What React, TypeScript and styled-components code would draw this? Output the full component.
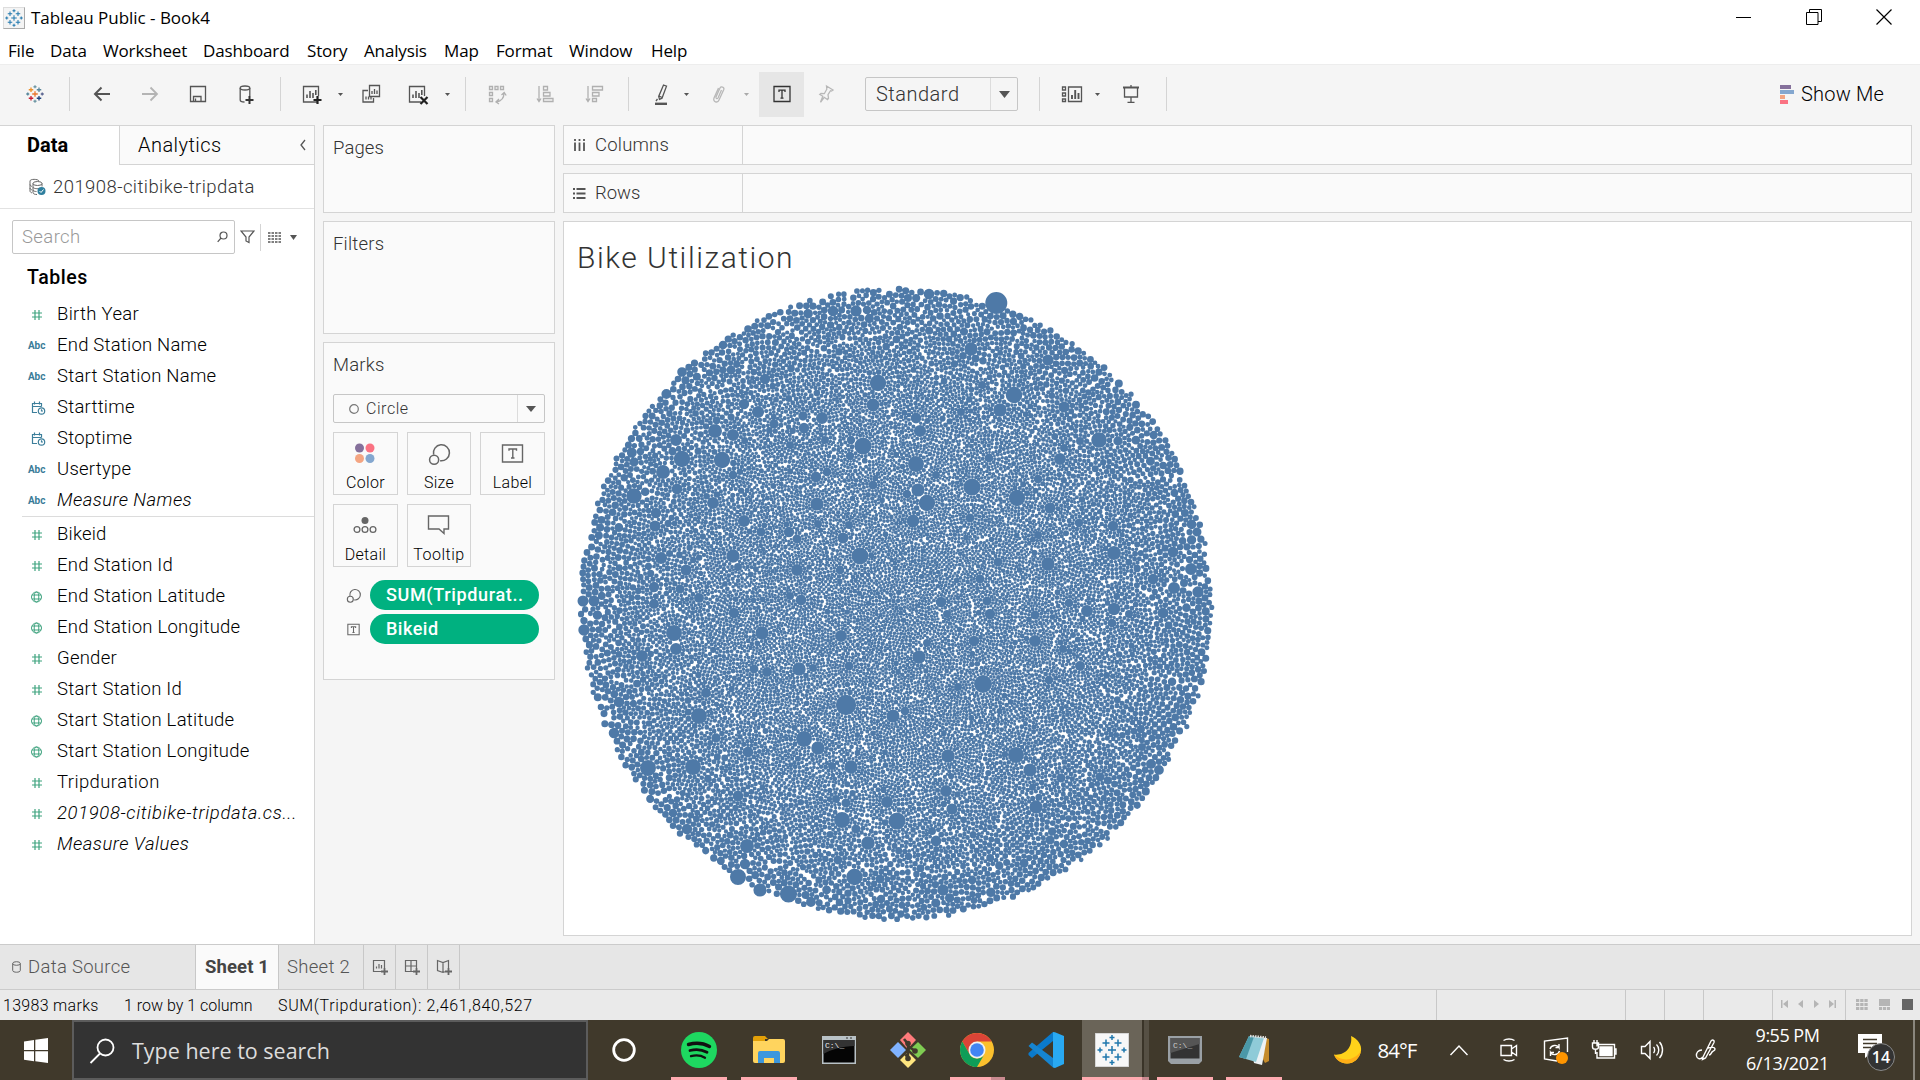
import React, { useMemo } from "react";
import styled, { createGlobalStyle } from "styled-components";

const BOOK = `Roboto, "Open Sans", "Liberation Sans", sans-serif`;
const UI = `"Open Sans", "Noto Sans", sans-serif`;
const LINE = "#d4d4d4";

const Global = createGlobalStyle`
  *, *::before, *::after { box-sizing: border-box; }
  body { margin: 0; background: #f5f5f5; overflow: hidden; }
  svg { display: block; flex: none; }
`;

const Desktop = styled.div`
  width: 1920px;
  height: 1080px;
  display: flex;
  flex-direction: column;
  background: #f5f5f5;
  font-family: ${BOOK};
  font-weight: 300;
  color: #000;
  white-space: nowrap;
  overflow: hidden;
`;

const Text = styled.span<{ $size?: number; $ls?: number; $color?: string; $weight?: number; $ui?: boolean; $italic?: boolean }>`
  font-family: ${(p) => (p.$ui ? UI : BOOK)};
  font-size: ${(p) => p.$size ?? 18}px;
  letter-spacing: ${(p) => p.$ls ?? 0}px;
  color: ${(p) => p.$color ?? "#000"};
  font-weight: ${(p) => p.$weight ?? 300};
  font-style: ${(p) => (p.$italic ? "italic" : "normal")};
  line-height: 1.2;
`;

/* ---------- window chrome ---------- */

const TitleBar = styled.header`
  height: 35px;
  flex: none;
  display: flex;
  align-items: center;
  padding-left: 3px;
  background: #fff;
`;
const AppTile = styled.div`
  width: 22px;
  height: 22px;
  margin-right: 6px;
  display: grid;
  place-items: center;
  background: #f4f4f4;
  border: 1px solid #ccc;
  border-color: #ddd #aaa #aaa #ddd;
`;
const WindowTitle = styled.div`
  padding-top: 1px;
`;
const WindowButtons = styled.div`
  margin-left: auto;
  display: flex;
  padding: 0 1px 2px 0;
`;
const WindowButton = styled.div`
  width: 70px;
  height: 33px;
  display: grid;
  place-items: center;
`;
const MenuBar = styled.nav`
  height: 29px;
  flex: none;
  display: flex;
  align-items: center;
  padding: 3px 0 0 8px;
  background: #fff;
`;
const MenuItem = styled.div<{ $w: number }>`
  width: ${(p) => p.$w}px;
`;

/* ---------- toolbar ---------- */

const Toolbar = styled.div`
  height: 61px;
  flex: none;
  display: flex;
  align-items: center;
  padding-bottom: 2px;
  border-top: 1px solid #ededed;
`;
const Slot = styled.div<{ $w?: number; $ml?: number; $on?: boolean }>`
  width: ${(p) => p.$w ?? 24}px;
  margin-left: ${(p) => p.$ml ?? 0}px;
  height: 45px;
  flex: none;
  display: grid;
  place-items: center;
  background: ${(p) => (p.$on ? "#e6e6e6" : "transparent")};
`;
const Rule = styled.div<{ $h?: number; $ml?: number }>`
  width: 1px;
  flex: none;
  height: ${(p) => p.$h ?? 34}px;
  margin-left: ${(p) => p.$ml ?? 0}px;
  background: ${LINE};
`;
const Picker = styled.div<{ $w: number; $h: number; $btn: number; $m?: string }>`
  width: ${(p) => p.$w}px;
  height: ${(p) => p.$h}px;
  margin: ${(p) => p.$m ?? "0"};
  flex: none;
  display: grid;
  grid-template-columns: 1fr ${(p) => p.$btn}px;
  border: 1px solid #c6c6c6;
  border-radius: 2px;
`;
const PickerValue = styled.div<{ $pad: number }>`
  display: flex;
  align-items: center;
  gap: 7px;
  padding-left: ${(p) => p.$pad}px;
  border-right: 1px solid #dcdcdc;
`;
const PickerButton = styled.div`
  display: grid;
  place-items: center;
`;
const ShowMe = styled.div`
  margin-left: auto;
  width: 140px;
  display: flex;
  align-items: center;
  gap: 6px;
`;

/* ---------- workspace ---------- */

const Workspace = styled.main`
  height: 819px;
  flex: none;
  display: flex;
`;
const DataPane = styled.aside`
  width: 315px;
  flex: none;
  display: flex;
  flex-direction: column;
  background: #fff;
  border: 1px solid ${LINE};
  border-width: 1px 1px 0 0;
`;
const PaneTabs = styled.div`
  height: 39px;
  flex: none;
  display: grid;
  grid-template-columns: 119px 1fr;
`;
const PaneTab = styled.div<{ $active?: boolean }>`
  display: flex;
  align-items: center;
  justify-content: space-between;
  padding: 0 7px ${(p) => (p.$active ? 2 : 0)}px ${(p) => (p.$active ? 27 : 18)}px;
  ${(p) => !p.$active && `background:#fafafa;border-left:1px solid ${LINE};border-bottom:1px solid ${LINE};`}
`;
const Source = styled.div`
  height: 44px;
  flex: none;
  display: flex;
  align-items: center;
  gap: 7px;
  padding: 1px 0 0 28px;
  border-bottom: 1px solid #e2e2e2;
`;
const SearchRow = styled.div`
  height: 45px;
  flex: none;
  display: flex;
  align-items: center;
  padding: 11px 0 0 12px;
`;
const SearchBox = styled.div`
  width: 223px;
  height: 34px;
  display: flex;
  align-items: center;
  justify-content: space-between;
  padding: 0 6px 0 9px;
  border: 1px solid #c6c6c6;
  border-radius: 2px;
`;
const Heading = styled.div`
  height: 45px;
  flex: none;
  padding: 12px 0 0 27px;
`;
const FieldList = styled.div<{ $top?: boolean }>`
  margin-left: ${(p) => (p.$top ? 22 : 0)}px;
  padding-left: ${(p) => (p.$top ? 6 : 28)}px;
  padding-top: ${(p) => (p.$top ? 2 : 0)}px;
  border-top: ${(p) => (p.$top ? "1px solid #dcdcdc" : "0")};
`;
const Field = styled.div`
  height: 31px;
  display: grid;
  grid-template-columns: 29px 1fr;
  align-items: center;
`;

const Cards = styled.section`
  width: 232px;
  margin-left: 8px;
  flex: none;
  display: flex;
  flex-direction: column;
  gap: 8px;
`;
const Card = styled.div<{ $h: number }>`
  height: ${(p) => p.$h}px;
  flex: none;
  padding: 11px 9px 0 9px;
  background: #fafafa;
  border: 1px solid ${LINE};
`;
const MarkGrid = styled.div`
  display: grid;
  grid-template-columns: 65px 64px 65px;
  grid-auto-rows: 63px;
  gap: 9px;
  margin-top: 9px;
`;
const MarkButton = styled.div`
  display: flex;
  flex-direction: column;
  align-items: center;
  justify-content: space-between;
  padding: 8px 0 2px;
  border: 1px solid ${LINE};
`;
const PillRow = styled.div`
  display: grid;
  grid-template-columns: 37px 169px;
  align-items: center;
  height: 34px;
`;
const PillIcon = styled.div`
  padding-left: 12px;
`;
const Pill = styled.div`
  height: 30px;
  display: flex;
  align-items: center;
  padding-left: 16px;
  border-radius: 15px;
  background: #00b180;
`;
const Pills = styled.div`
  padding-top: 11px;
`;

const Sheet = styled.section`
  flex: 1;
  margin: 0 8px 8px 8px;
  display: flex;
  flex-direction: column;
  gap: 8px;
`;
const Shelf = styled.div`
  height: 40px;
  flex: none;
  display: grid;
  grid-template-columns: 179px 1fr;
  background: #fafafa;
  border: 1px solid ${LINE};
`;
const ShelfLabel = styled.div`
  display: flex;
  align-items: center;
  gap: 9px;
  padding: 1px 0 0 9px;
  border-right: 1px solid ${LINE};
`;
const View = styled.div`
  flex: 1;
  display: flex;
  flex-direction: column;
  background: #fff;
  border: 1px solid ${LINE};
`;
const ViewTitle = styled.div`
  height: 58px;
  flex: none;
  padding: 18px 0 0 13px;
`;

/* ---------- sheet tabs and status ---------- */

const SheetTabs = styled.div`
  height: 45px;
  flex: none;
  display: flex;
  background: #e6e6e6;
  border-top: 1px solid #cbcbcb;
`;
const SheetTab = styled.div<{ $w: number; $active?: boolean; $pad?: number }>`
  width: ${(p) => p.$w}px;
  display: flex;
  align-items: center;
  gap: 7px;
  padding-left: ${(p) => p.$pad ?? 8}px;
  border-right: 1px solid #c8c8c8;
  background: ${(p) => (p.$active ? "#fafafa" : "transparent")};
`;
const Status = styled.div`
  height: 31px;
  flex: none;
  display: flex;
  background: #eaeaea;
  border-top: 1px solid #cbcbcb;
`;
const StatusText = styled.div<{ $w: number }>`
  width: ${(p) => p.$w}px;
  display: flex;
  align-items: center;
  padding-top: 1px;
`;
const StatusCell = styled.div<{ $w: number; $shift?: number }>`
  width: ${(p) => p.$w}px;
  display: flex;
  align-items: center;
  justify-content: center;
  padding: 0 0 2px ${(p) => p.$shift ?? 0}px;
  border-left: 1px solid #c8c8c8;
`;

/* ---------- windows taskbar ---------- */

const Taskbar = styled.footer`
  height: 60px;
  flex: none;
  display: flex;
  background: #40392b;
`;
const Start = styled.div`
  width: 72px;
  display: grid;
  place-items: center;
`;
const TaskSearch = styled.div`
  width: 516px;
  display: flex;
  align-items: center;
  gap: 17px;
  padding: 1px 0 0 15px;
  background: #333;
  border: 2px solid #5c5c5c;
`;
const TaskItem = styled.div<{ $w?: number; $ml: number; $bar?: boolean; $active?: boolean }>`
  width: ${(p) => p.$w ?? 56}px;
  margin-left: ${(p) => p.$ml}px;
  flex: none;
  display: grid;
  place-items: center;
  padding-top: 3px;
  border-bottom: 3px solid ${(p) => (p.$bar ? "#ffaab0" : "transparent")};
  background: ${(p) => (p.$active ? "#6a6458" : "transparent")};
  background-clip: padding-box;
`;
const Stacked = styled.div<{ $w: number; $ml?: number; $active?: boolean }>`
  width: ${(p) => p.$w}px;
  margin-left: ${(p) => p.$ml ?? 0}px;
  flex: none;
  border-bottom: 3px solid #c98a90;
  background: ${(p) => (p.$active ? "#565044" : "transparent")};
  box-shadow: ${(p) => (p.$active ? "inset 2px 0 #3a3428" : "none")};
`;
const Tray = styled.div`
  margin-left: auto;
  display: flex;
  align-items: center;
`;
const TrayItem = styled.div<{ $w: number }>`
  width: ${(p) => p.$w}px;
  display: grid;
  place-items: center;
`;
const Clock = styled.div`
  width: 109px;
  margin-left: 5px;
  display: flex;
  flex-direction: column;
  align-items: center;
  gap: 6px;
`;
const Notify = styled.div`
  width: 71px;
  padding: 4px 0 0 16px;
`;
const DesktopEdge = styled.div`
  width: 7px;
  height: 60px;
  border-left: 2px solid #8a867d;
`;

/* ---------- icons ---------- */

const plus = (x: number, y: number, s: number) => `M${x - s} ${y}H${x + s}M${x} ${y - s}V${y + s}`;
function TableauLogo({ size, multi, weight = 1 }: { size: number; multi?: boolean; weight?: number }) {
  const b = "#1f77ad";
  const c = multi
    ? ["#e8762d", "#eb912c", "#5b879b", "#c72035", "#1f447e", "#7199a6", "#59879b", "#7199a6", "#5c6692"]
    : Array(9).fill(b);
  return (
    <svg width={size} height={size} viewBox="0 0 36 36" fill="none" strokeWidth={(weight * 36) / size}>
      <path d={plus(18, 18, 5.5)} stroke={c[0]} />
      <path d={plus(10, 9.5, 4.5)} stroke={c[1]} />
      <path d={plus(26, 9.5, 4.5)} stroke={c[2]} />
      <path d={plus(10, 26.5, 4.5)} stroke={c[3]} />
      <path d={plus(26, 26.5, 4.5)} stroke={c[4]} />
      <path d={plus(18, 3.5, 3)} stroke={c[5]} />
      <path d={plus(3.5, 18, 3)} stroke={c[6]} />
      <path d={plus(18, 32.5, 3)} stroke={c[7]} />
      <path d={plus(32.5, 18, 3)} stroke={c[8]} />
    </svg>
  );
}
const Caret = ({ w = 5, color = "#555" }: { w?: number; color?: string }) => (
  <svg width={w} height={Math.ceil(w * 0.6)} viewBox="0 0 10 6" preserveAspectRatio="none">
    <path d="M0 0H10L5 6z" fill={color} />
  </svg>
);
const Ico = ({ children, c = "#555", s = 24, w = 1.3 }: { children: React.ReactNode; c?: string; s?: number; w?: number }) => (
  <svg width={s} height={s} viewBox="0 0 24 24" fill="none" stroke={c} strokeWidth={w}>
    {children}
  </svg>
);
const BAR_FRAME = "M18 20H4.5V4.5H19.5V14";
const BARS = "M8 16v-3.5M11 16V9M14 16v-5M16.8 13V8";
const BackIcon = () => <Ico w={2}><path d="M20 12H5M11.5 5.5L5 12l6.500 6.500" /></Ico>;
const ForwardIcon = () => <Ico w={1.8} c="#b4b4b4"><path d="M4 12H19M12.500 5.500L19 12l-6.500 6.500" /></Ico>;
const SaveIcon = () => <Ico><path d="M4.500 4.500h15v15h-15zM7.500 19.500v-5h7.500v5M9.500 19v-2.500" /></Ico>;
const AddDataIcon = () => (
  <Ico>
    <ellipse cx="11" cy="6" rx="4.800" ry="2" />
    <path d="M6.200 6v12c0 1 2 2 4.300 2M15.800 6v8" />
    <path d="M15.500 14v8M11.500 18h8" stroke="#333" strokeWidth="2" />
  </Ico>
);
const NewSheetIcon = () => (
  <Ico><path d={BAR_FRAME} /><path d={BARS} strokeWidth="1.600" /><path d="M18.500 14v8M14.500 18h8" stroke="#222" strokeWidth="2.200" /></Ico>
);
const DuplicateIcon = () => (
  <Ico>
    <path d="M10.500 3.500h10v11h-10zM9 8.500H4v11.500h10.500v-4" />
    <path d="M13 12V9M15.500 12V7M18 12V8.500M7 17.500v-3M9.500 17.500v-3M12 17.500v-3" />
  </Ico>
);
const ClearIcon = () => (
  <Ico><path d="M14 20H2.500V4.500H17.500V14" /><path d="M6 16v-3.500M9 16V9M12 16v-5M14.800 13V8" strokeWidth="1.600" /><path d="M13.500 15l7 7M20.500 15l-7 7" stroke="#222" strokeWidth="2.200" /></Ico>
);
const SwapIcon = () => (
  <Ico c="#b0b0b0">
    <path d="M4.500 4.500h3v3h-3zM10 4.500h3v3h-3zM15.500 4.500h3v3h-3zM4.500 10.500h3v3h-3zM4.500 16.500h3v3h-3z" />
    <path d="M19 11c0 5-2 8-7.500 9M16.500 13l2.700-2.500 2 3M14 17l-3 3 3 2" />
  </Ico>
);
const SortAsc = () => (
  <Ico c="#b0b0b0"><path d="M6 4v15M4 16.500l2 3 2-3M10.500 4.500h4v3.500h-4zM10.500 10.500h6.500v3.500h-6.500zM10.500 16.500h9.500v3h-9.500z" /></Ico>
);
const SortDesc = () => (
  <Ico c="#b0b0b0"><path d="M6 4v15M4 16.500l2 3 2-3M10.500 4.500h10v3.500h-10zM10.500 10.500h6.500v3.500h-6.500zM10.500 16.500h4v3h-4z" /></Ico>
);
const PenIcon = () => (
  <Ico><path d="M14.500 3l3 1.200-4.500 12-2.500 1.200-.8-3zM10 14l3 1.500M8.500 17l-1.500 2" /><path d="M6 21.800h12" strokeWidth="2.400" /></Ico>
);
const ClipIcon = () => (
  <Ico c="#b8b8b8"><path d="M9 15l4-9c1-2 4.500-1 3.800 1.500L12 18c-1.300 3.500-6.500 2-5-2l4.500-10M9 15c-.4 2 1.500 2 2 1l3.500-8" /></Ico>
);
const LabelIcon = ({ c = "#555", s = 24, w = 1.3 }) => (
  <Ico c={c} s={s} w={w}><path d="M4 4.500h16v15H4zM9 10V8.200h6V10M12 8.200v8M10.500 16.200h3" /></Ico>
);
const PinIcon = () => (
  <Ico c="#b8b8b8"><path d="M12.500 4l6.500 4-1.500 1-1-.3-2.500 4 .5 3.500-1 1.300-3.300-2.200-3.700 5 2.300-6-3-1.800 1.200-1 3.300.2 2.500-4.500z" /></Ico>
);
const ShowCardsIcon = () => (
  <Ico><path d="M2.500 5h3v3h-3zM2.500 11h3v3h-3zM2.500 17h3v2.500h-3zM8.500 5h13v14.500h-13z" /><path d="M12 17v-4M15.200 17V8M18.500 17v-6" strokeWidth="1.900" /></Ico>
);
const PresentIcon = () => (
  <Ico><path d="M12 3v2M5.500 6v9h13V6M12 15v5M8.500 20.300h7" /><path d="M4 5.500h16" strokeWidth="2" /></Ico>
);
const SizeIcon = ({ s = 26, w = 1.4 }) => (
  <Ico s={s} w={w} c="#666"><path d="M7 12.500a7.400 7.400 0 1 1 6 5.700" /><circle cx="7.500" cy="17.300" r="4.200" /></Ico>
);

const HashIcon = () => (
  <svg width="16" height="14" viewBox="0 0 16 14" stroke="#3fa37f" strokeWidth="1.200" fill="none">
    <path d="M7 2v10M11 2v10M4 5h10M4 9h10" />
  </svg>
);
const GlobeIcon = () => (
  <svg width="16" height="14" viewBox="0 0 16 14" stroke="#3fa37f" strokeWidth="1" fill="none">
    <circle cx="8.500" cy="7" r="5" /><ellipse cx="8.500" cy="7" rx="2.300" ry="5" /><path d="M4 5h9M4 9h9" />
  </svg>
);
const DateIcon = () => (
  <svg width="18" height="16" viewBox="0 0 18 16" stroke="#3d7f9b" strokeWidth="1.200" fill="none">
    <path d="M9 12.500H4.500v-9h9v3M4.500 6.500h9M6.500 1.500v3M11.500 1.500v3" /><circle cx="13.500" cy="11" r="3.200" /><path d="M13.500 9.300V11h1.500" />
  </svg>
);
const Abc = () => <Text $size={10} $weight={700} $color="#3a7c98" $ls={-0.1}>Abc</Text>;

/* ---------- packed bubbles ---------- */

type Bubble = [number, number, number];
const CX = 333;
const CY = 325;
const RADIUS = 317;

// Marks that stand out, in window coordinates; the view's origin is (563, 279).
const LARGE: Bubble[] = [
  [833, 311, 5.3], [856, 311, 5.7], [867, 310, 4.3], [878, 383, 8.2], [873, 405, 6.5], [748, 329, 3.8], [723, 345, 4.3], [731, 370, 4.5],
  [682, 372, 4.8], [765, 379, 5.2], [744, 404, 5.2], [758, 412, 6.1], [715, 431, 7], [733, 435, 6.1], [822, 418, 6], [803, 416, 4.7],
  [804, 428, 5.2], [774, 424, 4.7], [863, 446, 8.6], [850, 456, 4.2], [851, 440, 4.2], [676, 440, 6], [682, 459, 8.2], [722, 460, 8.2],
  [663, 472, 7], [733, 475, 4.4], [634, 462, 4.7], [677, 489, 5.4], [634, 496, 7.7], [713, 503, 6], [656, 513, 5.2], [655, 526, 5.6],
  [744, 521, 6.1], [761, 532, 4.6], [789, 532, 5.2], [797, 539, 4.6], [817, 504, 6.6], [816, 477, 5.4], [827, 472, 4.4], [818, 524, 4],
  [843, 538, 5.5], [860, 556, 8.5], [797, 570, 6], [840, 570, 4.3], [733, 556, 6.7], [738, 567, 4], [661, 558, 6.1], [686, 570, 5.5],
  [680, 589, 4.6], [654, 587, 5.2], [654, 604, 5], [699, 598, 5], [583, 601, 5.5], [594, 601, 5.5], [801, 600, 5.4], [790, 596, 4],
  [873, 485, 4.5], [849, 525, 4], [790, 445, 4], [825, 440, 4], [996.3, 303, 11], [929, 294, 5.3], [971, 349, 6.7], [1048, 360, 5.6],
  [908, 298, 4], [1014, 395, 8.3], [1000, 410, 6.8], [1064, 407, 5.6], [982, 385, 4], [916, 418, 5.4], [920, 431, 6.1], [961, 412, 4],
  [1099, 440, 7.8], [1118, 441, 4.7], [1080, 441, 4], [1064, 448, 4], [1060, 459, 6], [916, 464, 8], [989, 458, 4.4], [972, 487, 8.6],
  [1017, 498, 8.2], [918, 490, 6.6], [927, 503, 8.2], [913, 521, 6.4], [907, 494, 4.3], [936, 475, 4], [1038, 479, 4.3], [1050, 508, 5.5],
  [970, 518, 4.6], [1079, 523, 4.2], [1113, 526, 5.2], [1114, 553, 7], [1038, 535, 4], [1048, 564, 6.7], [998, 562, 4.5], [980, 579, 4.6],
  [941, 602, 5.3], [987, 601, 4.6], [1173, 552, 5.4], [1191, 569, 6], [1153, 579, 5.3], [1174, 588, 6], [1198, 592, 5.7], [1184, 583, 4],
  [1197, 532, 4.5], [1069, 603, 4.3], [1114, 609, 6.2], [1087, 611, 6], [674, 633, 8], [676, 649, 6], [734, 613, 5.2], [762, 633, 6.7],
  [841, 636, 6], [642, 656, 6], [584, 630, 5.7], [799, 669, 6.8], [767, 672, 5], [754, 669, 4.5], [849, 666, 4.5], [813, 668, 4],
  [919, 657, 6.7], [927, 643, 4], [974, 641, 5.3], [990, 614, 5.2], [947, 614, 4], [1035, 615, 4.6], [1035, 641, 6], [1063, 649, 4],
  [1163, 613, 5.4], [1129, 614, 4], [1112, 623, 4.3], [1080, 666, 5], [1049, 680, 4.4], [983, 684, 9], [958, 687, 4], [846, 705, 10.2],
  [893, 716, 6.6], [905, 711, 4.4], [699, 716, 8], [706, 693, 5], [619, 702, 5.3], [804, 739, 8], [818, 748, 6.8], [748, 752, 5.4],
  [716, 738, 4.7], [648, 768, 8], [693, 767, 8], [614, 733, 5.3], [851, 767, 6.8], [832, 766, 4], [948, 756, 6.8], [1016, 755, 8],
  [1030, 770, 6.6], [1061, 778, 4.6], [1100, 777, 4.6], [1151, 764, 5], [946, 791, 6], [952, 809, 5.6], [1036, 807, 6.7], [887, 802, 6],
  [846, 803, 4.6], [836, 799, 4], [842, 820, 8], [897, 821, 8.6], [856, 829, 4.6], [868, 843, 6.8], [936, 841, 5.4], [932, 831, 4],
  [738, 796, 5.4], [747, 846, 7], [745, 864, 5.2], [738, 877, 8], [760, 890, 6.6], [788.5, 894, 8.6], [854.5, 877, 8.3], [838, 860, 4.5],
  [943, 890, 5.7], [881, 899, 4.2], [880, 879, 4.5], [1050, 840, 4.6], [1064, 844, 4.4], [687, 829, 5.2], [673, 813, 4.3], [1141, 729, 4],
  [1142, 747, 4],
];

const fromCentre = (x: number, y: number) => Math.hypot(x - CX, y - CY);

function packBubbles(): Bubble[] {
  let seed = 20190801;
  const rnd = () => {
    seed = (seed * 1664525 + 1013904223) >>> 0;
    return seed / 4294967296;
  };
  const cell = 8;
  const cols = 90;
  const grid: Bubble[][] = Array.from({ length: cols * cols }, () => []);
  const out: Bubble[] = [];
  const add = (b: Bubble) => {
    out.push(b);
    const x0 = Math.floor((b[0] - b[2]) / cell), x1 = Math.floor((b[0] + b[2]) / cell);
    const y0 = Math.floor((b[1] - b[2]) / cell), y1 = Math.floor((b[1] + b[2]) / cell);
    for (let y = Math.max(0, y0); y <= Math.min(cols - 1, y1); y++)
      for (let x = Math.max(0, x0); x <= Math.min(cols - 1, x1); x++) grid[y * cols + x].push(b);
  };
  const free = (x: number, y: number, r: number) => {
    const x0 = Math.floor((x - r) / cell), x1 = Math.floor((x + r) / cell);
    const y0 = Math.floor((y - r) / cell), y1 = Math.floor((y + r) / cell);
    for (let gy = Math.max(0, y0); gy <= Math.min(cols - 1, y1); gy++)
      for (let gx = Math.max(0, x0); gx <= Math.min(cols - 1, x1); gx++)
        for (const b of grid[gy * cols + gx]) {
          const dx = b[0] - x, dy = b[1] - y, m = b[2] + r - 0.1;
          if (dx * dx + dy * dy < m * m) return false;
        }
    return true;
  };
  const pending: Bubble[] = LARGE.map(([x, y, r]) => [x - 563, y - 279, r] as Bubble).sort(
    (a, b) => fromCentre(a[0], a[1]) - fromCentre(b[0], b[1])
  );
  pending.forEach(add);
  const size = (d: number) => {
    const base = 1.72 + 1.55 * Math.pow(d / RADIUS, 4);
    const k = rnd();
    return base * (k > 0.985 ? 1.6 : k > 0.94 ? 1.3 : 0.74 + rnd() * 0.42);
  };
  const first: Bubble = [CX, CY, 1.6];
  add(first);
  const queue: Bubble[] = [first];
  const spread = (c: Bubble, i: number) => {
    const start = rnd() * Math.PI * 2;
    const steps = c[2] > 3.7 ? 96 : 44;
    let r = size(fromCentre(c[0], c[1]));
    for (let s = 0; s < steps; s++) {
      const a = start + (s / steps) * Math.PI * 2;
      const x = c[0] + Math.cos(a) * (c[2] + r);
      const y = c[1] + Math.sin(a) * (c[2] + r);
      if (fromCentre(x, y) + r > RADIUS + Math.sin(a * 7 + i) * 1.5) continue;
      if (free(x, y, r)) {
        const b: Bubble = [x, y, r];
        add(b);
        queue.push(b);
        r = size(fromCentre(x, y));
      }
    }
  };
  let next = 0;
  for (let i = 0; i < queue.length && queue.length < 26000; i++) {
    const c = queue[i];
    const d = fromCentre(c[0], c[1]);
    while (next < pending.length && fromCentre(pending[next][0], pending[next][1]) - pending[next][2] < d) {
      spread(pending[next], next);
      next++;
    }
    spread(c, i);
  }
  return out;
}

function BubbleChart() {
  const d = useMemo(
    () =>
      packBubbles()
        .map(([x, y, r]) => `M${(x - r).toFixed(1)} ${y.toFixed(1)}a${r.toFixed(2)} ${r.toFixed(2)} 0 1 0 ${(2 * r).toFixed(2)} 0a${r.toFixed(2)} ${r.toFixed(2)} 0 1 0 ${(-2 * r).toFixed(2)} 0`)
        .join(""),
    []
  );
  return (
    <svg width="680" height="655" viewBox="1 1 680 655">
      <path d={d} fill="#4e79a7" />
    </svg>
  );
}

/* ---------- data ---------- */

type Kind = "hash" | "abc" | "date" | "globe";
type Row = [Kind, string, number, boolean?];
const DIMENSIONS: Row[] = [
  ["hash", "Birth Year", 0.3], ["abc", "End Station Name", 0.22], ["abc", "Start Station Name", 0.24], ["date", "Starttime", 0.24],
  ["date", "Stoptime", 0.24], ["abc", "Usertype", 0.24], ["abc", "Measure Names", 0.42, true],
];
const MEASURES: Row[] = [
  ["hash", "Bikeid", 0.2], ["hash", "End Station Id", 0.24], ["globe", "End Station Latitude", 0.25], ["globe", "End Station Longitude", 0.25],
  ["hash", "Gender", 0.24], ["hash", "Start Station Id", 0.24], ["globe", "Start Station Latitude", 0.26], ["globe", "Start Station Longitude", 0.26],
  ["hash", "Tripduration", 0.4], ["hash", "201908-citibike-tripdata.cs...", 0.63, true], ["hash", "Measure Values", 0.48, true],
];
const KIND_ICON: Record<Kind, React.ReactNode> = { hash: <HashIcon />, abc: <Abc />, date: <DateIcon />, globe: <GlobeIcon /> };
const MENU: [string, number][] = [
  ["File", 42], ["Data", 53], ["Worksheet", 100], ["Dashboard", 104], ["Story", 57], ["Analysis", 80],
  ["Map", 52], ["Format", 73], ["Window", 82], ["Help", 60],
];

const Fields = ({ rows, top }: { rows: Row[]; top?: boolean }) => (
  <FieldList $top={top}>
    {rows.map(([kind, name, ls, it]) => (
      <Field key={name}>
        {KIND_ICON[kind]}
        <Text $size={18.5} $italic={it} $ls={ls}>{name}</Text>
      </Field>
    ))}
  </FieldList>
);

const TrayStroke = ({ children, w = 24, h = 28 }: { children: React.ReactNode; w?: number; h?: number }) => (
  <svg width={w} height={h} viewBox={`0 0 ${w} ${h}`} fill="none" stroke="#fff" strokeWidth="1.400">{children}</svg>
);

export default function App() {
  return (
    <Desktop>
      <Global />
      <TitleBar>
        <AppTile><TableauLogo size={18} weight={1} /></AppTile>
        <WindowTitle><Text $ui $size={17} $weight={400} $ls={-0.03}>Tableau Public - Book4</Text></WindowTitle>
        <WindowButtons>
          <WindowButton><svg width="16" height="16"><path d="M0 8.500h15" stroke="#000" /></svg></WindowButton>
          <WindowButton><svg width="16" height="16" fill="none" stroke="#000"><path d="M.5 3.500h11.500v12H.5zM3.500 3.500v-3h12v12h-3.500" /></svg></WindowButton>
          <WindowButton><svg width="16" height="16" stroke="#000" strokeWidth="1.200"><path d="M.5.500l15 15M15.500.500l-15 15" /></svg></WindowButton>
        </WindowButtons>
      </TitleBar>
      <MenuBar>
        {MENU.map(([m, w]) => (
          <MenuItem key={m} $w={w}><Text $ui $size={17} $weight={400} $ls={-0.15}>{m}</Text></MenuItem>
        ))}
      </MenuBar>

      <Toolbar>
        <Slot $w={69}><TableauLogo size={18} multi weight={1.300} /></Slot>
        <Rule />
        <Slot $ml={20}><BackIcon /></Slot>
        <Slot $ml={24}><ForwardIcon /></Slot>
        <Slot $ml={24}><SaveIcon /></Slot>
        <Slot $ml={24}><AddDataIcon /></Slot>
        <Rule $ml={22} />
        <Slot $ml={18}><NewSheetIcon /></Slot>
        <Slot $ml={14} $w={6}><Caret /></Slot>
        <Slot $ml={16}><DuplicateIcon /></Slot>
        <Slot $ml={24}><ClearIcon /></Slot>
        <Slot $ml={13} $w={6}><Caret /></Slot>
        <Rule $ml={15} />
        <Slot $ml={19}><SwapIcon /></Slot>
        <Slot $ml={24}><SortAsc /></Slot>
        <Slot $ml={25}><SortDesc /></Slot>
        <Rule $ml={22} />
        <Slot $ml={20}><PenIcon /></Slot>
        <Slot $ml={10} $w={6}><Caret /></Slot>
        <Slot $ml={18}><ClipIcon /></Slot>
        <Slot $ml={12} $w={6}><Caret color="#aaa" /></Slot>
        <Slot $ml={10} $w={45} $on><LabelIcon c="#333" /></Slot>
        <Slot $ml={10}><PinIcon /></Slot>
        <Picker $w={153} $h={34} $btn={26} $m="0 0 0 27px">
          <PickerValue $pad={10}><Text $size={20} $color="#333" $ls={0.5}>Standard</Text></PickerValue>
          <PickerButton><Caret w={11} /></PickerButton>
        </Picker>
        <Rule $ml={21} />
        <Slot $ml={20}><ShowCardsIcon /></Slot>
        <Slot $ml={10} $w={6}><Caret /></Slot>
        <Slot $ml={19}><PresentIcon /></Slot>
        <Rule $ml={23} />
        <ShowMe>
          <svg width="15" height="20"><path d="M0 1h11v4H0z" fill="#85709b" /><path d="M0 6h14v4H0z" fill="#84a7cf" /><path d="M0 11h5v4H0z" fill="#f4a582" /><path d="M0 16h8v4H0z" fill="#fa7282" /></svg>
          <Text $size={20} $ls={0.2}>Show Me</Text>
        </ShowMe>
      </Toolbar>

      <Workspace>
        <DataPane>
          <PaneTabs>
            <PaneTab $active><Text $size={20} $weight={700}>Data</Text></PaneTab>
            <PaneTab>
              <Text $size={20} $ls={0.45}>Analytics</Text>
              <svg width="8" height="12" fill="none" stroke="#555" strokeWidth="1.300"><path d="M6 1L2 6l4 5" /></svg>
            </PaneTab>
          </PaneTabs>
          <Source>
            <svg width="18" height="18" viewBox="0 0 18 18" fill="none" stroke="#666">
              <path d="M11 3C10 .8 2 .8 2 3v10c0 1 1 1.500 2 2M2 6.500c0 1 1 1.500 2 2M2 10c0 1 1 1.500 2 2" />
              <ellipse cx="9.500" cy="5.500" rx="4.500" ry="2" /><path d="M5 5.500v9c0 1.500 2 2 4 2M14 5.500v3M5 9c0 1.500 4 2 6 1.500M5 12c0 1 2 1.500 3.500 1.500" />
              <circle cx="13.500" cy="13" r="4" fill="#2f7f9e" stroke="none" /><path d="M11.500 13l1.500 1.500 2.500-3" stroke="#fff" />
            </svg>
            <Text $size={18.5} $color="#333" $ls={0.43}>201908-citibike-tripdata</Text>
          </Source>
          <SearchRow>
            <SearchBox>
              <Text $size={18.5} $color="#999" $ls={0.4}>Search</Text>
              <svg width="11" height="12" fill="none" stroke="#555" strokeWidth="1.200"><circle cx="6.500" cy="4.500" r="3.500" /><path d="M4 7L.7 10.800" /></svg>
            </SearchBox>
            <Slot $w={25}>
              <svg width="15" height="14" fill="none" stroke="#555" strokeWidth="1.200"><path d="M1 1h13L9 7v5.500L6 11V7z" /></svg>
            </Slot>
            <Rule $h={27} />
            <Slot $w={26}>
              <svg width="13" height="11" stroke="#555" strokeWidth="1.300" strokeDasharray="2.500 1"><path d="M0 1h13M0 4h13M0 7h13M0 10h13" /></svg>
            </Slot>
            <Slot $w={12}><Caret w={7} /></Slot>
          </SearchRow>
          <Heading><Text $size={19.5} $weight={500} $ls={0.55}>Tables</Text></Heading>
          <Fields rows={DIMENSIONS} />
          <Fields rows={MEASURES} top />
        </DataPane>

        <Cards>
          <Card $h={88}><Text $size={18.5} $color="#333" $ls={0.1}>Pages</Text></Card>
          <Card $h={113}><Text $size={18.5} $color="#333" $ls={0.2}>Filters</Text></Card>
          <Card $h={338}>
            <Text $size={18.5} $color="#333" $ls={0.2}>Marks</Text>
            <Picker $w={212} $h={29} $btn={26} $m="18px 0 0 0">
              <PickerValue $pad={15}>
                <svg width="10" height="10" fill="none" stroke="#777" strokeWidth="1.200"><circle cx="5" cy="5" r="4.300" /></svg>
                <Text $size={16} $color="#333" $ls={0.55}>Circle</Text>
              </PickerValue>
              <PickerButton><Caret w={10} /></PickerButton>
            </Picker>
            <MarkGrid>
              <MarkButton>
                <svg width="23" height="24"><circle cx="5.500" cy="7" r="4.500" fill="#85709b" /><circle cx="16" cy="7" r="4.500" fill="#fa7282" /><circle cx="5.500" cy="17.500" r="4.500" fill="#f4a582" /><circle cx="16" cy="17.500" r="4.500" fill="#84a7cf" /></svg>
                <Text $size={16} $ls={0.3}>Color</Text>
              </MarkButton>
              <MarkButton><SizeIcon /><Text $size={16} $ls={0.3}>Size</Text></MarkButton>
              <MarkButton>
                <svg width="24" height="24" fill="none" stroke="#666" strokeWidth="1.400"><path d="M1.500 4h20v17h-20zM8 9.800V8h7.500v1.800M11.800 8v9M10 17h3.500" /></svg>
                <Text $size={16} $ls={0.3}>Label</Text>
              </MarkButton>
              <MarkButton>
                <svg width="28" height="24" fill="none" stroke="#666" strokeWidth="1.300"><circle cx="13" cy="7.500" r="3.500" fill="#666" stroke="none" /><circle cx="5" cy="16.500" r="2.900" /><circle cx="13" cy="16.500" r="2.900" /><circle cx="21" cy="16.500" r="2.900" /></svg>
                <Text $size={16} $ls={0.3}>Detail</Text>
              </MarkButton>
              <MarkButton>
                <svg width="24" height="24" fill="none" stroke="#666" strokeWidth="1.400"><path d="M1.500 3h20v13h-4.500v4.500l-5-4.500h-10.500z" /></svg>
                <Text $size={16} $ls={0.5}>Tooltip</Text>
              </MarkButton>
            </MarkGrid>
            <Pills>
              <PillRow><PillIcon><SizeIcon s={17} w={1.600} /></PillIcon><Pill><Text $size={18} $weight={500} $color="#fff" $ls={0.65}>SUM(Tripdurat..</Text></Pill></PillRow>
              <PillRow><PillIcon><LabelIcon c="#666" s={17} w={1.500} /></PillIcon><Pill><Text $size={18} $weight={500} $color="#fff" $ls={0.5}>Bikeid</Text></Pill></PillRow>
            </Pills>
          </Card>
        </Cards>

        <Sheet>
          <Shelf>
            <ShelfLabel>
              <svg width="13" height="13" stroke="#555" strokeWidth="1.800"><path d="M2 0v2M6.500 0v2M11 0v2M2 3.500V12M6.500 3.500V12M11 3.500V12" /></svg>
              <Text $size={18.5} $color="#333" $ls={0.2}>Columns</Text>
            </ShelfLabel>
          </Shelf>
          <Shelf>
            <ShelfLabel>
              <svg width="13" height="13" stroke="#555" strokeWidth="1.800"><path d="M0 2h2M0 6.500h2M0 11h2M3.500 2H12.500M3.500 6.500H12.500M3.500 11H12.500" /></svg>
              <Text $size={18.5} $color="#333">Rows</Text>
            </ShelfLabel>
          </Shelf>
          <View>
            <ViewTitle><Text $size={30} $color="#333" $ls={1.55}>Bike Utilization</Text></ViewTitle>
            <BubbleChart />
          </View>
        </Sheet>
      </Workspace>

      <SheetTabs>
        <SheetTab $w={196} $pad={12}>
          <svg width="9" height="12" fill="none" stroke="#666"><ellipse cx="4.500" cy="2.500" rx="3.800" ry="1.800" /><path d="M.7 2.500v7c0 2.300 7.600 2.300 7.600 0v-7" /></svg>
          <Text $size={18.5} $color="#555" $ls={0.3}>Data Source</Text>
        </SheetTab>
        <SheetTab $w={83} $active $pad={9}><Text $size={18.5} $weight={700} $color="#444" $ls={0.1}>Sheet 1</Text></SheetTab>
        <SheetTab $w={85}><Text $size={18.5} $color="#555" $ls={0.3}>Sheet 2</Text></SheetTab>
        <SheetTab $w={32}>
          <svg width="17" height="17" fill="none" stroke="#666" strokeWidth="1.200"><path d="M9 12.500H1.500V1.500h11V9M4.500 9.500V7.500M7 9.500V5M9.500 9.500V6" /><path d="M12.500 9v7M9 12.500h7" strokeWidth="1.800" /></svg>
        </SheetTab>
        <SheetTab $w={32}>
          <svg width="17" height="17" fill="none" stroke="#666" strokeWidth="1.200"><path d="M9 12.500H1.500V1.500h11V9M1.500 7h11M7 1.500v11" /><path d="M12.500 9v7M9 12.500h7" strokeWidth="1.800" /></svg>
        </SheetTab>
        <SheetTab $w={32}>
          <svg width="17" height="17" fill="none" stroke="#666" strokeWidth="1.200"><path d="M7 13.500l-5.500-2V1.500L7 3.500l5.500-2V9M7 3.500v10M7 13.500l2-.7" /><path d="M12.500 9v7M9 12.500h7" strokeWidth="1.800" /></svg>
        </SheetTab>
      </SheetTabs>
      <Status>
        <StatusText $w={3} />
        <StatusText $w={121}><Text $size={16} $ls={0.3}>13983 marks</Text></StatusText>
        <StatusText $w={154}><Text $size={16}>1 row by 1 column</Text></StatusText>
        <StatusText $w={1158}><Text $size={16} $ls={0.65}>SUM(Tripduration): 2,461,840,527</Text></StatusText>
        <StatusCell $w={189} />
        <StatusCell $w={39} />
        <StatusCell $w={39} />
        <StatusCell $w={69} />
        <StatusCell $w={73}>
          <svg width="56" height="8" fill="#b5b5b5"><path d="M0 0h1.500v8H0zM7 0v8L2 4zM22 0v8l-5-4zM33 0v8l5-4zM48 0v8l5-4zM53.500 0H55v8h-1.500z" /></svg>
        </StatusCell>
        <StatusCell $w={75} $shift={4}>
          <svg width="58" height="11">
            <path d="M0 1.500h12M0 5.500h12M0 9.500h12" stroke="#b5b5b5" strokeWidth="3" strokeDasharray="3.300 .9" />
            <path d="M23 0h11v7H23z" fill="#b5b5b5" /><path d="M23 9.500h11" stroke="#b5b5b5" strokeWidth="3" strokeDasharray="3.200 .8" />
            <path d="M46 0h11v11H46z" fill="#666" />
          </svg>
        </StatusCell>
      </Status>

      <Taskbar>
        <Start>
          <svg width="24" height="25" fill="#fff"><path d="M0 3.500L10 2v10H0zM11.300 1.800L24 0v12H11.300zM0 13.200h10v10L0 21.700zM11.300 13.200H24V25l-12.700-1.800z" /></svg>
        </Start>
        <TaskSearch>
          <svg width="26" height="26" fill="none" stroke="#fff" strokeWidth="1.800"><circle cx="16.500" cy="9.500" r="8" /><path d="M11 15.500L1.500 25" /></svg>
          <Text $ui $size={21.5} $weight={400} $color="#ddd" $ls={0}>Type here to search</Text>
        </TaskSearch>
        <TaskItem $w={56} $ml={8}>
          <svg width="26" height="26" fill="none" stroke="#fff" strokeWidth="2.800"><circle cx="13" cy="13" r="10.300" /></svg>
        </TaskItem>
        <TaskItem $ml={19} $bar>
          <svg width="36" height="36" fill="none" stroke="#111" strokeLinecap="round"><circle cx="18" cy="18" r="18" fill="#1ed760" stroke="none" /><path d="M7.500 12.500c7-2 15-1.300 21 2" strokeWidth="3.400" /><path d="M9 18.500c6-1.700 12-1 17 1.800" strokeWidth="2.800" /><path d="M10 24.200c5-1.300 10-.8 14 1.500" strokeWidth="2.300" /></svg>
        </TaskItem>
        <TaskItem $ml={14} $bar>
          <svg width="34" height="30"><path d="M1 3q0-2 2-2h10l3 3h-3v5H1z" fill="#e3a008" /><path d="M1 6h14l2-2h14q2 0 2 2v20q0 2-2 2H3q-2 0-2-2z" fill="#ffd45e" /><path d="M6 28V18q0-2 2-2h18q2 0 2 2v10h-6v-5H12v5z" fill="#3c97dd" /></svg>
        </TaskItem>
        <TaskItem $ml={14}>
          <svg width="34" height="28"><path d="M0 0h34v28H0z" fill="#b9c2c6" /><path d="M1.500 4h31v22.500h-31z" fill="#050505" /><path d="M1.500 4h31v6C20 10 8 14 1.500 18z" fill="#333" /><path d="M24 2h2M28 2h2" stroke="#333" /><text x="3" y="12" fill="#eee" fontSize="8" fontFamily="Liberation Mono, monospace">C:\_</text></svg>
        </TaskItem>
        <TaskItem $ml={12} $w={58}>
          <svg width="36" height="36" viewBox="0 0 36 36">
            <path d="M18 0l8 8-8.500 9L10 8z" fill="#ff7b7b" /><path d="M28 10l8 8-8 8-8.500-8z" fill="#7fcc52" /><path d="M18 20l8 8-8 8-8-8z" fill="#ffe680" /><path d="M8 10l8 8-8 8-8-8z" fill="#80b3ff" />
            <path d="M14 7l4 5v15M18 14l7 5M18 22l-3 2" stroke="#40392b" strokeWidth="2.600" fill="none" /><g fill="#40392b"><circle cx="18" cy="11.500" r="2.800" /><circle cx="18" cy="26.500" r="2.800" /><circle cx="25" cy="19" r="2.800" /></g>
          </svg>
        </TaskItem>
        <TaskItem $ml={13} $w={54} $bar>
          <svg width="34" height="34" viewBox="-17 -17 34 34"><circle r="17" fill="#fbc02d" /><path d="M-14.700-8.500A17 17 0 0 1 14.700-8.500H0L-7.400 4.200z" fill="#db4437" /><path d="M-14.700-8.500A17 17 0 0 0 0 17L7.400 4.200A8.500 8.500 0 0 1-7.400 4.200z" fill="#0f9d58" /><circle r="8.500" fill="#f1f1f1" /><circle r="6.800" fill="#4285f4" /></svg>
        </TaskItem>
        <Stacked $w={14} $ml={-13} />
        <TaskItem $ml={13} $w={56}>
          <svg width="36" height="36" viewBox="0 0 36 36"><path d="M25 0v9L4 26l-3.500-3v-2z" fill="#0a7acc" /><path d="M.5 14L4 10.500 25 26v9.500z" fill="#1685d1" /><path d="M25 0l2 .2L36 4v28l-9 4-2-.5V9z" fill="#29a9f2" /></svg>
        </TaskItem>
        <TaskItem $ml={8} $w={60} $bar $active>
          <svg width="34" height="34" fill="none" stroke="#1f77ad" strokeWidth="1.500"><path d="M0 0h34v34H0z" fill="#f7f7f7" stroke="#ccc" /><path d={[plus(17, 17, 4), plus(11, 10, 3.500), plus(23, 10, 3.500), plus(11, 24, 3.500), plus(23, 24, 3.500), plus(17, 4.500, 2.500), plus(5, 17, 2.500), plus(29, 17, 2.500), plus(17, 29.500, 2.500)].join("")} /></svg>
        </TaskItem>
        <Stacked $w={7} $active />
        <TaskItem $ml={8} $bar>
          <svg width="34" height="28"><path d="M0 0h34v25l-3 3H3l-3-3z" fill="#9aa0a5" /><path d="M2.500 2h29v20.500h-29z" fill="#333" /><path d="M2.500 2h29v6l-29 9z" fill="#555" /><text x="5" y="12" fill="#ccc" fontSize="8" fontFamily="Liberation Mono, monospace">C:\_</text></svg>
        </TaskItem>
        <TaskItem $ml={13} $bar>
          <svg width="34" height="34"><path d="M14 4l15 1 3 1v22l-4 2z" fill="#c58b2a" /><path d="M12 3l18 2-5 27-8-2z" fill="#eef2f4" /><path d="M12 3l15 2-8 24L2 24z" fill="#8fcbd8" /><path d="M12 3l5 .7L9 26l-7-2z" fill="#4a98a8" /><path d="M13 3l16 1.500" stroke="#ddd" strokeWidth="2.500" strokeDasharray="1.500 1" /></svg>
        </TaskItem>
        <Tray>
          <TrayItem $w={44}>
            <svg width="28" height="28"><path d="M17 0c7 3 11 9 10 15C25.500 23 19 28 12.500 27.500 7 27 2 24 0 18.500 10 20 19 12 17 0z" fill="#ffd21a" /><path d="M27 15C25.500 23 19 28 12.500 27.500 7 27 2 24 0 18.500 8 26 20 25 27 15z" fill="#ffae17" /></svg>
          </TrayItem>
          <TrayItem $w={54}><Text $ui $size={20.5} $weight={400} $color="#fff" $ls={-1}>84°F</Text></TrayItem>
          <TrayItem $w={70}><TrayStroke w={20} h={12}><path d="M1.500 11L10 2l8.500 9" /></TrayStroke></TrayItem>
          <TrayItem $w={30}><TrayStroke w={18} h={24}><path d="M1 7.500h10.500v10H1zM11.500 11l5-3.500v10l-5-3.500M3.500 2.500c3-2 8-2 11 0M3.500 21.500c3 2 8 2 11 0" /></TrayStroke></TrayItem>
          <TrayItem $w={64}><TrayStroke w={26} h={28}><path d="M14 25L1.500 23V5L24.500 2v14M7 13c1-4 7-5 9-1.500V8M16 11.500h-3.500M16.500 15c-1 4-7 5-9 1.500V20M7.500 16.500H11" /><circle cx="19" cy="22" r="6" fill="#ff9500" stroke="none" /></TrayStroke></TrayItem>
          <TrayItem $w={32}><TrayStroke w={26} h={22}><path d="M6 7.500V5.500h17.500V19H6v-6M23.500 10H25v5h-1.500M1.500 4v4c0 3 6 3 6 0V4zM3 1v3M6 1v3M4.500 10v5" /><path d="M9 8h12v8.500H9z" fill="#fff" /></TrayStroke></TrayItem>
          <TrayItem $w={64}><TrayStroke w={24} h={22}><path d="M1.500 7.500v7h3.500l5 5V2.500l-5 5zM13.500 8c1.500 1.500 1.500 4.500 0 6M16.500 5.500c3 3 3 8 0 11M19.500 3c4 4.500 4 11.500 0 16" /></TrayStroke></TrayItem>
          <TrayItem $w={44}><TrayStroke w={22} h={24}><path d="M8 19L16 3c1-2 4-.5 3 1.500L10.500 20l-3 1.500zM7 12c-4 0-6 3-5.500 6S6 22 7.500 19M13 10c3-1 7-1 7 1s-2 1.500-3 3-1 3-3 3" /></TrayStroke></TrayItem>
          <Clock>
            <Text $ui $size={18} $weight={400} $color="#fff" $ls={-0.500}>9:55 PM</Text>
            <Text $ui $size={18} $weight={400} $color="#fff" $ls={-0.250}>6/13/2021</Text>
          </Clock>
          <Notify>
            <svg width="40" height="40">
              <path d="M0 2h24v19H13l-6 5v-5H0z" fill="#fff" /><path d="M5 7.500h14M5 11.500h14M5 15.500h8" stroke="#40392b" strokeWidth="1.300" />
              <circle cx="23" cy="25" r="13.500" fill="#333" stroke="#888" /><text x="23" y="31" textAnchor="middle" fill="#fff" fontSize="16" fontWeight="600" fontFamily="Open Sans, sans-serif">14</text>
            </svg>
          </Notify>
          <DesktopEdge />
        </Tray>
      </Taskbar>
    </Desktop>
  );
}
